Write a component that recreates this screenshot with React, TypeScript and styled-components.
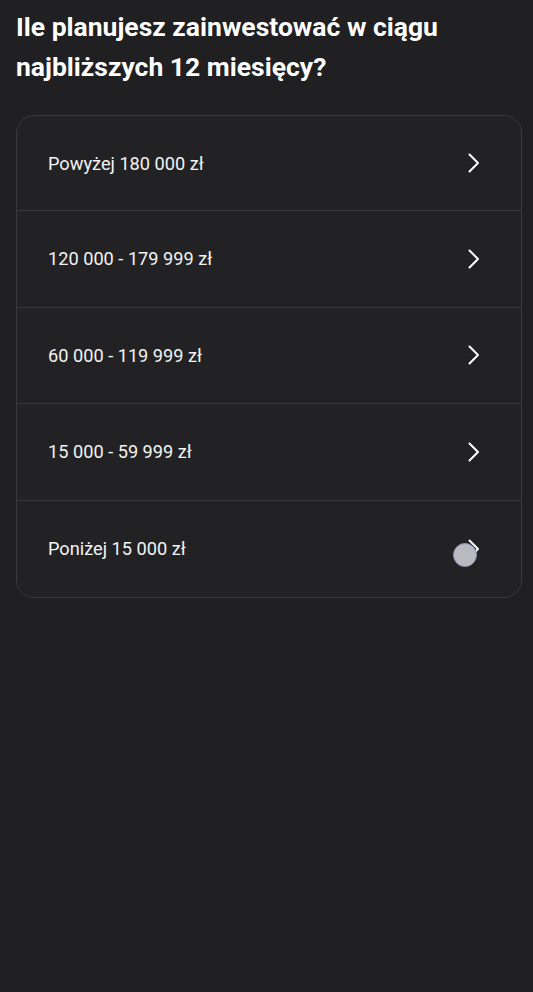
import styled, { createGlobalStyle } from "styled-components";

const GlobalStyle = createGlobalStyle`
  html, body {
    margin: 0;
    padding: 0;
    background: #202022;
  }
  body {
    font-family: Roboto, "Noto Sans", sans-serif;
    color: #ffffff;
  }
`;

const Page = styled.div`
  min-height: 992px;
  padding: 7px 16px 0 16px;
  box-sizing: border-box;
`;

const Title = styled.h1`
  margin: 0 0 28px 0;
  font-size: 26.5px;
  line-height: 40px;
  font-weight: 700;
  color: #ffffff;
  letter-spacing: 0;
`;

const OptionList = styled.div`
  border: 1px solid #3a3a3d;
  border-radius: 18px;
  overflow: hidden;
  background: #222224;
  width: 506px;
  box-sizing: border-box;
`;

const OptionRow = styled.button<{ $h: number; $last?: boolean }>`
  position: relative;
  display: flex;
  align-items: center;
  justify-content: space-between;
  width: 100%;
  height: ${(p) => p.$h}px;
  padding: 0 41px 0 31px;
  box-sizing: border-box;
  background: transparent;
  border: none;
  border-bottom: ${(p) => (p.$last ? "none" : "1px solid #3a3a3d")};
  color: #f2f2f2;
  font-family: Roboto, "Noto Sans", sans-serif;
  font-size: 18.2px;
  text-align: left;
  cursor: pointer;
`;

const Chevron = styled.svg`
  width: 12px;
  height: 20px;
  flex-shrink: 0;
`;

const TouchDot = styled.span`
  position: absolute;
  right: 44px;
  top: 50%;
  width: 24px;
  height: 24px;
  margin-top: -6px;
  border-radius: 50%;
  background: #b9b9bf;
  border: 1px solid #8c8fb8;
  box-sizing: border-box;
`;

const options = [
  "Powyżej 180 000 zł",
  "120 000 - 179 999 zł",
  "60 000 - 119 999 zł",
  "15 000 - 59 999 zł",
  "Poniżej 15 000 zł",
];

export default function App() {
  return (
    <Page>
      <GlobalStyle />
      <Title>Ile planujesz zainwestować w ciągu najbliższych 12 miesięcy?</Title>
      <OptionList>
        {options.map((label, i) => {
          const last = i === options.length - 1;
          return (
            <OptionRow key={label} $h={i === 0 ? 95 : last ? 96 : 96.5} $last={last}>
              <span>{label}</span>
              <Chevron viewBox="0 0 12 20" fill="none">
                <path d="M1.5 1.5 L10 10 L1.5 18.5" stroke="#ffffff" strokeWidth="2" strokeLinecap="round" strokeLinejoin="round" />
              </Chevron>
              {last && <TouchDot />}
            </OptionRow>
          );
        })}
      </OptionList>
    </Page>
  );
}
